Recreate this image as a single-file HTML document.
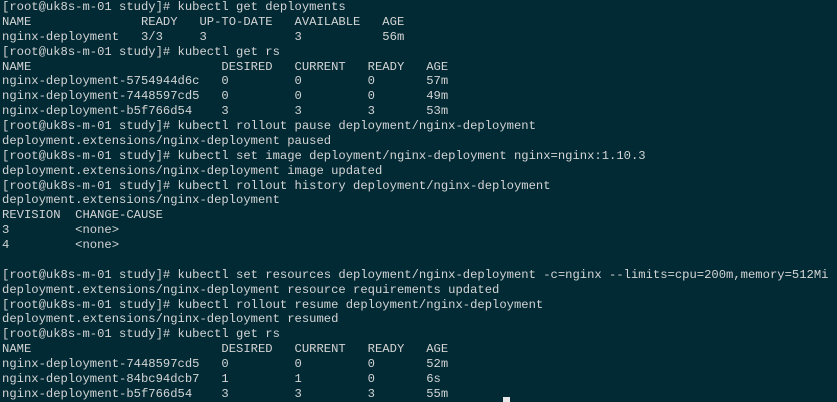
<!DOCTYPE html>
<html><head><meta charset="utf-8"><style>
html,body{margin:0;padding:0;background:#012a35;width:837px;height:402px;overflow:hidden}
pre{margin:0;position:absolute;left:2px;top:0px;font-family:"Liberation Mono",monospace;font-size:12.2px;line-height:14.88px;color:#d4d4d4;white-space:pre}
.cur{position:absolute;left:503px;top:397px;width:7px;height:5px;background:#e8e8e8}
</style></head><body>
<pre>[root@uk8s-m-01 study]# kubectl get deployments
NAME               READY   UP-TO-DATE   AVAILABLE   AGE
nginx-deployment   3/3     3            3           56m
[root@uk8s-m-01 study]# kubectl get rs
NAME                          DESIRED   CURRENT   READY   AGE
nginx-deployment-5754944d6c   0         0         0       57m
nginx-deployment-7448597cd5   0         0         0       49m
nginx-deployment-b5f766d54    3         3         3       53m
[root@uk8s-m-01 study]# kubectl rollout pause deployment/nginx-deployment
deployment.extensions/nginx-deployment paused
[root@uk8s-m-01 study]# kubectl set image deployment/nginx-deployment nginx=nginx:1.10.3
deployment.extensions/nginx-deployment image updated
[root@uk8s-m-01 study]# kubectl rollout history deployment/nginx-deployment
deployment.extensions/nginx-deployment
REVISION  CHANGE-CAUSE
3         &lt;none&gt;
4         &lt;none&gt;

[root@uk8s-m-01 study]# kubectl set resources deployment/nginx-deployment -c=nginx --limits=cpu=200m,memory=512Mi
deployment.extensions/nginx-deployment resource requirements updated
[root@uk8s-m-01 study]# kubectl rollout resume deployment/nginx-deployment
deployment.extensions/nginx-deployment resumed
[root@uk8s-m-01 study]# kubectl get rs
NAME                          DESIRED   CURRENT   READY   AGE
nginx-deployment-7448597cd5   0         0         0       52m
nginx-deployment-84bc94dcb7   1         1         0       6s
nginx-deployment-b5f766d54    3         3         3       55m</pre>
<div class="cur"></div>
</body></html>
